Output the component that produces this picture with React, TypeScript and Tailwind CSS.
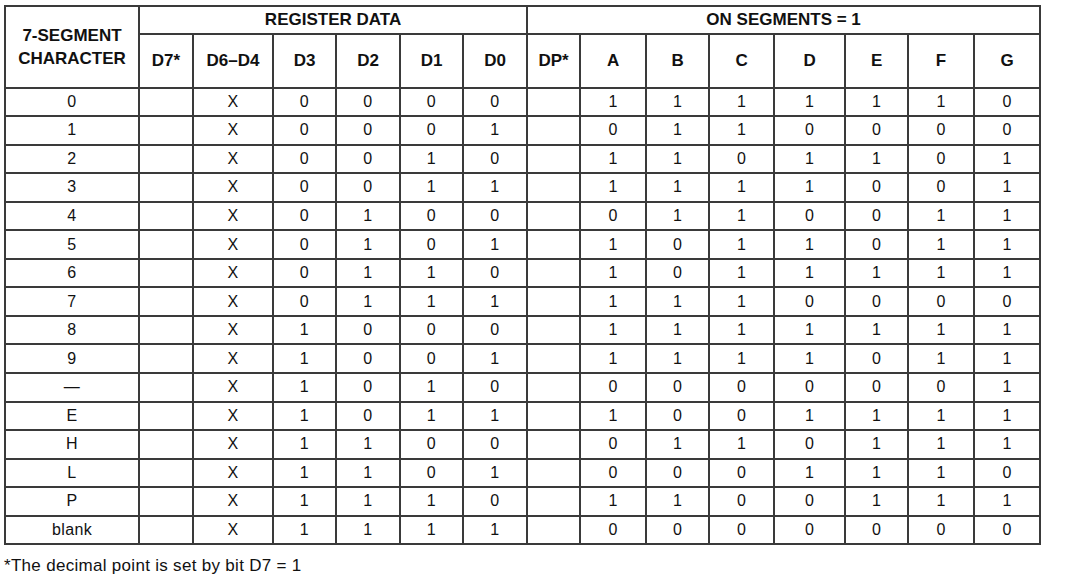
const regCols = ['D7*', 'D6–D4', 'D3', 'D2', 'D1', 'D0'];
const segCols = ['DP*', 'A', 'B', 'C', 'D', 'E', 'F', 'G'];

const widths = [134, 54, 80, 63, 64, 63, 64, 53, 66, 63, 65, 71, 63, 66, 66];

const rows: [string, string, string][] = [
  ['0', '0000', '1111110'],
  ['1', '0001', '0110000'],
  ['2', '0010', '1101101'],
  ['3', '0011', '1111001'],
  ['4', '0100', '0110011'],
  ['5', '0101', '1011011'],
  ['6', '0110', '1011111'],
  ['7', '0111', '1110000'],
  ['8', '1000', '1111111'],
  ['9', '1001', '1111011'],
  ['—', '1010', '0000001'],
  ['E', '1011', '1001111'],
  ['H', '1100', '0110111'],
  ['L', '1101', '0001110'],
  ['P', '1110', '1100111'],
  ['blank', '1111', '0000000'],
];

const cell = 'border-2 border-[#3a3a3a] text-center align-middle p-0';

export default function App() {
  return (
    <div className="min-h-[577px] w-[1074px] bg-white pl-[4px] pt-[5px] text-[#111] [font-family:'Liberation_Sans',Arial,sans-serif]">
      <table className="table-fixed border-collapse w-[1035px]">
        <colgroup>
          {widths.map((w, i) => (
            <col key={i} style={{ width: w }} />
          ))}
        </colgroup>
        <thead>
          <tr className="h-[27px] text-[17px] font-bold">
            <th rowSpan={2} className={`${cell} leading-[23px]`}>
              7-SEGMENT
              <br />
              CHARACTER
            </th>
            <th colSpan={6} className={cell}>
              REGISTER DATA
            </th>
            <th colSpan={8} className={cell}>
              ON SEGMENTS = 1
            </th>
          </tr>
          <tr className="h-[54px] text-[17px] font-bold">
            {regCols.concat(segCols).map((c) => (
              <th key={c} className={cell}>
                {c}
              </th>
            ))}
          </tr>
        </thead>
        <tbody className="text-[16px] tracking-[0.4px]">
          {rows.map(([ch, bits, segs]) => (
            <tr key={ch} className="h-[28.56px]">
              <td className={cell}>{ch}</td>
              <td className={cell}></td>
              <td className={cell}>X</td>
              {bits.split('').map((b, i) => (
                <td key={'b' + i} className={cell}>
                  {b}
                </td>
              ))}
              <td className={cell}></td>
              {segs.split('').map((s, i) => (
                <td key={'s' + i} className={cell}>
                  {s}
                </td>
              ))}
            </tr>
          ))}
        </tbody>
      </table>
      <p className="mt-[11px] text-[17px] leading-[20px] tracking-[0.3px]">*The decimal point is set by bit D7 = 1</p>
    </div>
  );
}
